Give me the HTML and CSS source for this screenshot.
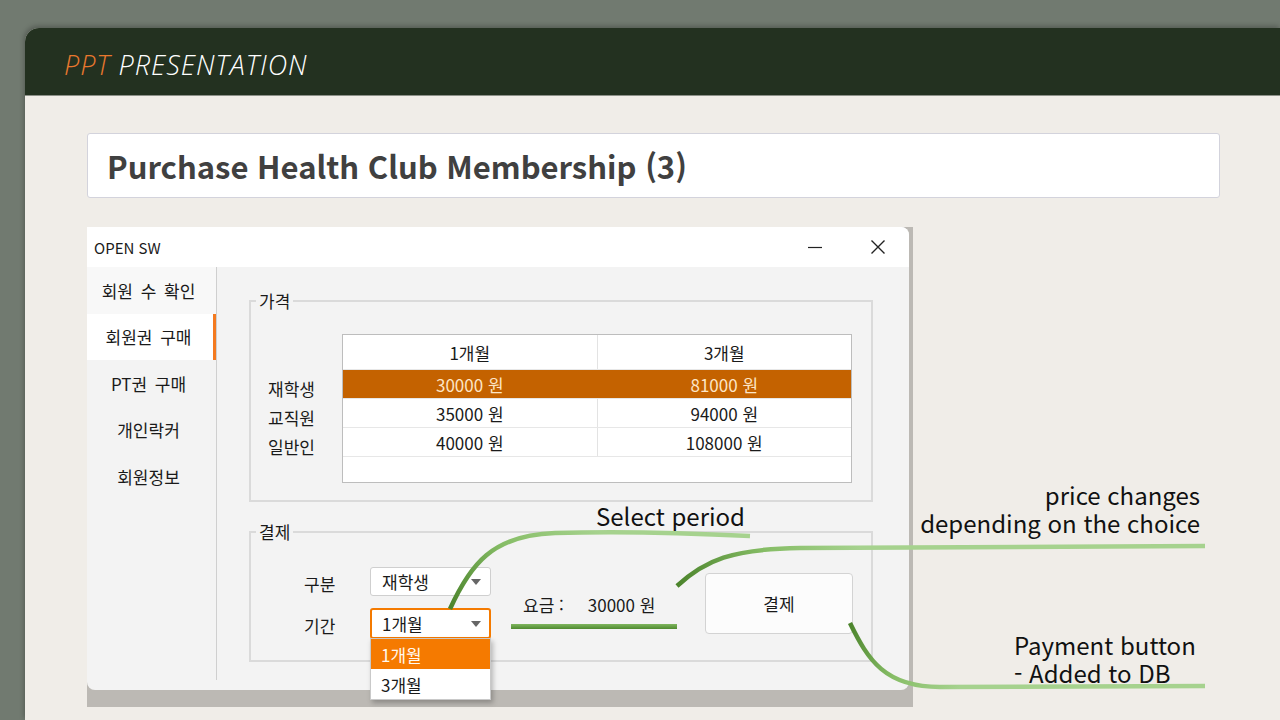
FILE: index.html
```html
<!DOCTYPE html>
<html lang="ko">
<head>
<meta charset="utf-8">
<title>Purchase Health Club Membership (3)</title>
<link rel="stylesheet" href="styles.css">
</head>
<body>
<div class="slide">
  <header class="slide-header"><span class="ppt">PPT</span>&nbsp;<span class="pres">PRESENTATION</span></header>
  <div class="slide-body">
    <div class="title-box"><h1>Purchase Health Club Membership (3)</h1></div>
    <div class="shot-row">
      <div class="shot">
        <div class="win">
          <div class="win-titlebar">
            <span class="win-title">OPEN SW</span>
            <div class="win-controls">
              <span class="cap-btn"><svg width="16" height="16" viewBox="0 0 16 16"><path d="M1 8.5h14" stroke="#222" stroke-width="1.2" fill="none"/></svg></span>
              <span class="cap-btn"><svg width="16" height="16" viewBox="0 0 16 16"><path d="M1.5 1.5l13 13M14.5 1.5l-13 13" stroke="#222" stroke-width="1.4" fill="none"/></svg></span>
            </div>
          </div>
          <div class="win-body">
            <nav class="side">
              <div class="side-item first">회원 수 확인</div>
              <div class="side-item active">회원권 구매</div>
              <div class="side-item">PT권 구매</div>
              <div class="side-item">개인락커</div>
              <div class="side-item">회원정보</div>
            </nav>
            <div class="panel">
              <fieldset class="group">
                <legend>가격</legend>
                <div class="price-inner">
                  <div class="row-labels">
                    <div>재학생</div>
                    <div>교직원</div>
                    <div>일반인</div>
                  </div>
                  <div class="grid">
                    <div class="grid-row head"><div class="cell">1개월</div><div class="cell">3개월</div></div>
                    <div class="grid-row sel"><div class="cell">30000 원</div><div class="cell">81000 원</div></div>
                    <div class="grid-row"><div class="cell">35000 원</div><div class="cell">94000 원</div></div>
                    <div class="grid-row"><div class="cell">40000 원</div><div class="cell">108000 원</div></div>
                  </div>
                </div>
              </fieldset>
              <fieldset class="group pay">
                <legend>결제</legend>
                <div class="pay-inner">
                  <div class="pay-fields">
                    <div class="field">
                      <span class="field-label">구분</span>
                      <div class="combo"><span>재학생</span><i class="arrow"></i></div>
                    </div>
                    <div class="field second">
                      <span class="field-label">기간</span>
                      <div class="combo focus"><span>1개월</span><i class="arrow"></i>
                        <div class="dropdown">
                          <div class="dd-item hl">1개월</div>
                          <div class="dd-item">3개월</div>
                        </div>
                      </div>
                    </div>
                  </div>
                  <div class="fee"><span>요금 :</span><span>30000 원</span></div>
                  <button class="pay-btn" type="button">결제</button>
                </div>
              </fieldset>
            </div>
          </div>
        </div>
        <div class="callout">Select period</div>
      </div>
      <div class="notes">
        <p class="note note-price"><span class="ln">price changes</span><span class="ln">depending on the choice</span></p>
        <p class="note note-pay"><span class="ln">Payment button</span><span class="ln">- Added to DB</span></p>
      </div>
    </div>
  </div>
</div>
<svg class="leaders" width="1280" height="720" viewBox="0 0 1280 720">
  <defs>
    <linearGradient id="g1" gradientUnits="userSpaceOnUse" x1="450" y1="609" x2="600" y2="533">
      <stop offset="0" stop-color="#4b832b"/><stop offset="0.45" stop-color="#86bd66"/><stop offset="1" stop-color="#a6d28e"/>
    </linearGradient>
    <linearGradient id="g2" gradientUnits="userSpaceOnUse" x1="677" y1="586" x2="860" y2="547">
      <stop offset="0" stop-color="#4b832b"/><stop offset="0.5" stop-color="#86bd66"/><stop offset="1" stop-color="#a6d28e"/>
    </linearGradient>
    <linearGradient id="g3" gradientUnits="userSpaceOnUse" x1="0" y1="624" x2="0" y2="629">
      <stop offset="0" stop-color="#7fb65e"/><stop offset="1" stop-color="#4f8a30"/>
    </linearGradient>
    <linearGradient id="g4" gradientUnits="userSpaceOnUse" x1="850" y1="623" x2="960" y2="687">
      <stop offset="0" stop-color="#4b832b"/><stop offset="0.5" stop-color="#86bd66"/><stop offset="1" stop-color="#a6d28e"/>
    </linearGradient>
  </defs>
  <path d="M450 609 C 470 565, 492 535, 555 533 C 620 531, 690 533, 750 536" stroke="url(#g1)" stroke-width="4.5" fill="none"/>
  <path d="M677 586 C 705 560, 732 549, 800 548 L 1205 546" stroke="url(#g2)" stroke-width="4.5" fill="none"/>
  <path d="M511 626.5 L 677 626.5" stroke="url(#g3)" stroke-width="5" fill="none"/>
  <path d="M850 623 C 868 660, 885 687, 940 687 L 1205 686" stroke="url(#g4)" stroke-width="4.5" fill="none"/>
</svg>
</body>
</html>
```

FILE: styles.css
```css
* { box-sizing: border-box; }
html, body { margin: 0; padding: 0; }
body {
  width: 1280px;
  height: 720px;
  overflow: hidden;
  position: relative;
  background: #717a70;
  font-family: "Noto Sans CJK KR", "Noto Sans", sans-serif;
  color: #1a1a1a;
}

.slide {
  margin: 28px 0 0 25px;
  height: 692px;
  background: #f0ede8;
  border-top-left-radius: 14px;
  box-shadow: -1px -2px 5px rgba(0, 0, 0, 0.25);
}

.slide-header {
  height: 68px;
  background: #233120;
  border-top-left-radius: 14px;
  border-bottom: 1px solid #8c9088;
  padding: 5px 0 0 39px;
  display: flex;
  align-items: center;
  font-family: "Open Sans", "Noto Sans", sans-serif;
  font-style: italic;
  font-weight: 300;
  font-size: 27px;
  letter-spacing: 1px;
  color: #ffffff;
}
.ppt { color: #e8782e; }

.slide-body { padding: 37px 60px 0 62px; }

.title-box {
  height: 65px;
  background: #ffffff;
  border: 1px solid #d3d3dc;
  border-radius: 3px;
  padding-left: 19px;
  display: flex;
  align-items: center;
}
.title-box h1 {
  margin: 0;
  font-size: 31px;
  font-weight: 700;
  color: #404040;
}

.shot-row { display: flex; margin-top: 29px; }

.shot {
  position: relative;
  flex: none;
  width: 826px;
  height: 480px;
  background: #bcb9b4;
}

.win {
  width: 822px;
  height: 463px;
  background: #f3f3f3;
  border-radius: 0 8px 8px 8px;
}

.win-titlebar {
  height: 40px;
  background: #ffffff;
  border-top-right-radius: 8px;
  display: flex;
  align-items: center;
  padding-left: 7px;
}
.win-title { font-size: 15px; color: #1b1b1b; }
.win-controls { margin-left: auto; display: flex; height: 100%; }
.cap-btn {
  width: 63px;
  display: flex;
  align-items: center;
  justify-content: center;
}

.win-body { display: flex; height: 423px; }

.side {
  flex: none;
  width: 130px;
  height: 413px;
  border-right: 1px solid #cfcfcf;
}
.side-item {
  height: 46.5px;
  display: flex;
  align-items: center;
  justify-content: center;
  padding-right: 6px;
  font-size: 17px;
  word-spacing: 3px;
}
.side-item.first { background: #f8f8f8; }
.side-item.active {
  background: #ffffff;
  box-shadow: inset -3px 0 0 #f47a20;
}

.panel { flex: 1; padding: 24px 0 0 32px; }

.group {
  margin: 0;
  padding: 0;
  min-width: 0;
  width: 624px;
  border: 2px solid #dadada;
}
.group legend {
  margin-left: 5px;
  padding: 0 3px;
  font-size: 17px;
  line-height: 20px;
}

.price-inner { display: flex; padding: 23px 0 17px 17px; }

.row-labels {
  width: 74px;
  padding-top: 40px;
  font-size: 17px;
  line-height: 29px;
}

.grid {
  width: 510px;
  height: 149px;
  background: #ffffff;
  border: 1px solid #bdbdbd;
  font-size: 17px;
}
.grid-row {
  display: flex;
  height: 29px;
  border-bottom: 1px solid #e7e7e7;
}
.grid-row.head { height: 35px; }
.cell {
  flex: 1;
  display: flex;
  align-items: center;
  justify-content: center;
  border-right: 1px solid #e3e3e3;
}
.cell:last-child { border-right: 0; }
.grid-row.sel { background: #c46200; color: #fde5c6; }
.grid-row.sel .cell { border-right-color: transparent; }

.group.pay { margin-top: 20px; }

.pay-inner {
  display: flex;
  align-items: flex-start;
  height: 118px;
  padding: 25px 18px 0 53px;
}

.field { display: flex; align-items: center; }
.field.second { margin-top: 12px; }
.field-label { width: 66px; font-size: 17px; padding-top: 3px; }

.combo {
  position: relative;
  width: 121px;
  height: 29px;
  border: 1px solid #cfcfcf;
  border-radius: 3px;
  background: #ffffff;
  display: flex;
  align-items: center;
  padding: 0 9px 0 11px;
  font-size: 17px;
}
.combo.focus {
  height: 31px;
  border: 2px solid #f47a00;
  padding-left: 10px;
  padding-right: 8px;
}
.arrow {
  margin-left: auto;
  width: 0;
  height: 0;
  border-left: 5px solid transparent;
  border-right: 5px solid transparent;
  border-top: 6px solid #666666;
}

.dropdown {
  position: absolute;
  top: calc(100% + 1px);
  left: -2px;
  width: 121px;
  background: #ffffff;
  border: 1px solid #c9c9c9;
  box-shadow: 2px 3px 5px rgba(0, 0, 0, 0.25);
  z-index: 2;
}
.dd-item {
  height: 30px;
  padding-left: 10px;
  display: flex;
  align-items: center;
}
.dd-item.hl { background: #f57a00; color: #fff8ee; }

.fee {
  margin: 26px 0 0 32px;
  display: flex;
  gap: 24px;
  font-size: 17px;
  line-height: 24px;
}

.pay-btn {
  margin: 6px 0 0 auto;
  width: 148px;
  height: 61px;
  border: 1px solid #d3d3d3;
  border-radius: 4px;
  background: #fcfcfc;
  font-family: inherit;
  font-size: 17px;
  color: #1a1a1a;
}

.callout {
  position: absolute;
  left: 509px;
  top: 275px;
  font-size: 24px;
  line-height: 28px;
  color: #111111;
  white-space: nowrap;
}

.notes {
  flex: 1;
  display: flex;
  flex-direction: column;
  padding-right: 20px;
  font-size: 24px;
  color: #111111;
}
.note { margin: 0; display: flex; flex-direction: column; }
.ln { display: block; height: 28px; line-height: 28px; white-space: nowrap; }
.note-price { align-items: flex-end; margin-top: 254px; }
.note-pay { margin-top: 94px; padding-left: 101px; }

.leaders {
  position: absolute;
  left: 0;
  top: 0;
  pointer-events: none;
}
```
